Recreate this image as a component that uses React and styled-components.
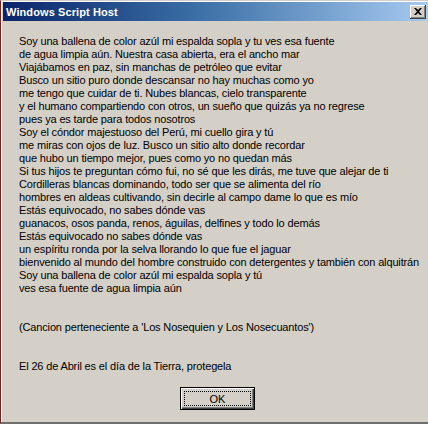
import React from "react";
import styled, { createGlobalStyle } from "styled-components";

const Global = createGlobalStyle`
  html, body { margin: 0; padding: 0; background: #d4d0c8; }
  #root { width: 428px; height: 424px; overflow: hidden; }
`;

const Frame = styled.div`
  box-sizing: border-box;
  width: 428px;
  height: 424px;
  display: flex;
  flex-direction: column;
  background: #d4d0c8;
  border-left: 1px solid #7d1f1f;
  border-top: 1px solid #d4d0c8;
  border-bottom: 2px solid #6f6f6f;
  box-shadow: inset 1px 1px 0 #ffffff;
  padding: 1px 0 0 2px;
  font-family: Tahoma, "Liberation Sans", Arial, sans-serif;
`;

const TitleBar = styled.div`
  height: 19px;
  display: flex;
  align-items: center;
  justify-content: space-between;
  padding: 0 2px 0 3px;
  background: linear-gradient(to right, #0a246a 0%, #3a6ea5 45%, #a6caf0 100%);
`;

const Title = styled.span`
  color: #ffffff;
  font-weight: bold;
  font-size: 11px;
  letter-spacing: 0.1px;
`;

const CloseButton = styled.div`
  width: 16px;
  height: 14px;
  box-sizing: border-box;
  background: #d4d0c8;
  display: flex;
  align-items: center;
  justify-content: center;
  box-shadow: inset -1px -1px 0 #404040, inset 1px 1px 0 #ffffff,
    inset -2px -2px 0 #808080;
`;

const Body = styled.div`
  flex: 1;
  display: flex;
  flex-direction: column;
  padding: 14px 0 0 16px;
`;

const Message = styled.div`
  color: #000;
  font-size: 11px;
  line-height: 13px;
  letter-spacing: -0.15px;
`;

const Line = styled.div`
  height: 13px;
  white-space: nowrap;
`;

const ButtonRow = styled.div`
  display: flex;
  padding: 14px 0 0 161px;
`;

const OkButton = styled.button`
  width: 75px;
  height: 23px;
  box-sizing: border-box;
  background: #d4d0c8;
  border: 1px solid #000;
  box-shadow: inset 1px 1px 0 #ffffff, inset -1px -1px 0 #404040,
    inset -2px -2px 0 #808080;
  font-family: Tahoma, "Liberation Sans", Arial, sans-serif;
  font-size: 11px;
  color: #000;
  display: flex;
  align-items: stretch;
  justify-content: stretch;
  padding: 3px;
`;

const Focus = styled.span`
  flex: 1;
  border: 1px dotted #000;
  display: flex;
  align-items: center;
  justify-content: center;
`;

const lines = [
  "Soy una ballena de color azúl mi espalda sopla y tu ves esa fuente",
  "de agua limpia aún. Nuestra casa abierta, era el ancho mar",
  "Viajábamos en paz, sin manchas de petróleo que evitar",
  "Busco un sitio puro donde descansar no hay muchas como yo",
  "me tengo que cuidar de ti. Nubes blancas, cielo transparente",
  "y el humano compartiendo con otros, un sueño que quizás ya no regrese",
  "pues ya es tarde para todos nosotros",
  "Soy el cóndor majestuoso del Perú, mi cuello gira y tú",
  "me miras con ojos de luz. Busco un sitio alto donde recordar",
  "que hubo un tiempo mejor, pues como yo no quedan más",
  "Si tus hijos te preguntan cómo fui, no sé que les dirás, me tuve que alejar de ti",
  "Cordilleras blancas dominando, todo ser que se alimenta del río",
  "hombres en aldeas cultivando, sin decirle al campo dame lo que es mío",
  "Estás equivocado, no sabes dónde vas",
  "guanacos, osos panda, renos, águilas, delfines y todo lo demás",
  "Estás equivocado no sabes dónde vas",
  "un espíritu ronda por la selva llorando lo que fue el jaguar",
  "bienvenido al mundo del hombre construido con detergentes y también con alquitrán",
  "Soy una ballena de color azúl mi espalda sopla y tú",
  "ves esa fuente de agua limpia aún",
  "",
  "",
  "(Cancion perteneciente a 'Los Nosequien y Los Nosecuantos')",
  "",
  "",
  "El 26 de Abril es el día de la Tierra, protegela",
];

export default function App() {
  return (
    <>
      <Global />
      <Frame>
        <TitleBar>
          <Title>Windows Script Host</Title>
          <CloseButton>
            <svg width="8" height="7" viewBox="0 0 8 7">
              <path d="M0 0h2l2 2 2-2h2L5 3.5 8 7H6L4 5 2 7H0l3-3.5z" fill="#000" />
            </svg>
          </CloseButton>
        </TitleBar>
        <Body>
          <Message>
            {lines.map((l, i) => (
              <Line key={i}>{l}</Line>
            ))}
          </Message>
          <ButtonRow>
            <OkButton>
              <Focus>OK</Focus>
            </OkButton>
          </ButtonRow>
        </Body>
      </Frame>
    </>
  );
}
